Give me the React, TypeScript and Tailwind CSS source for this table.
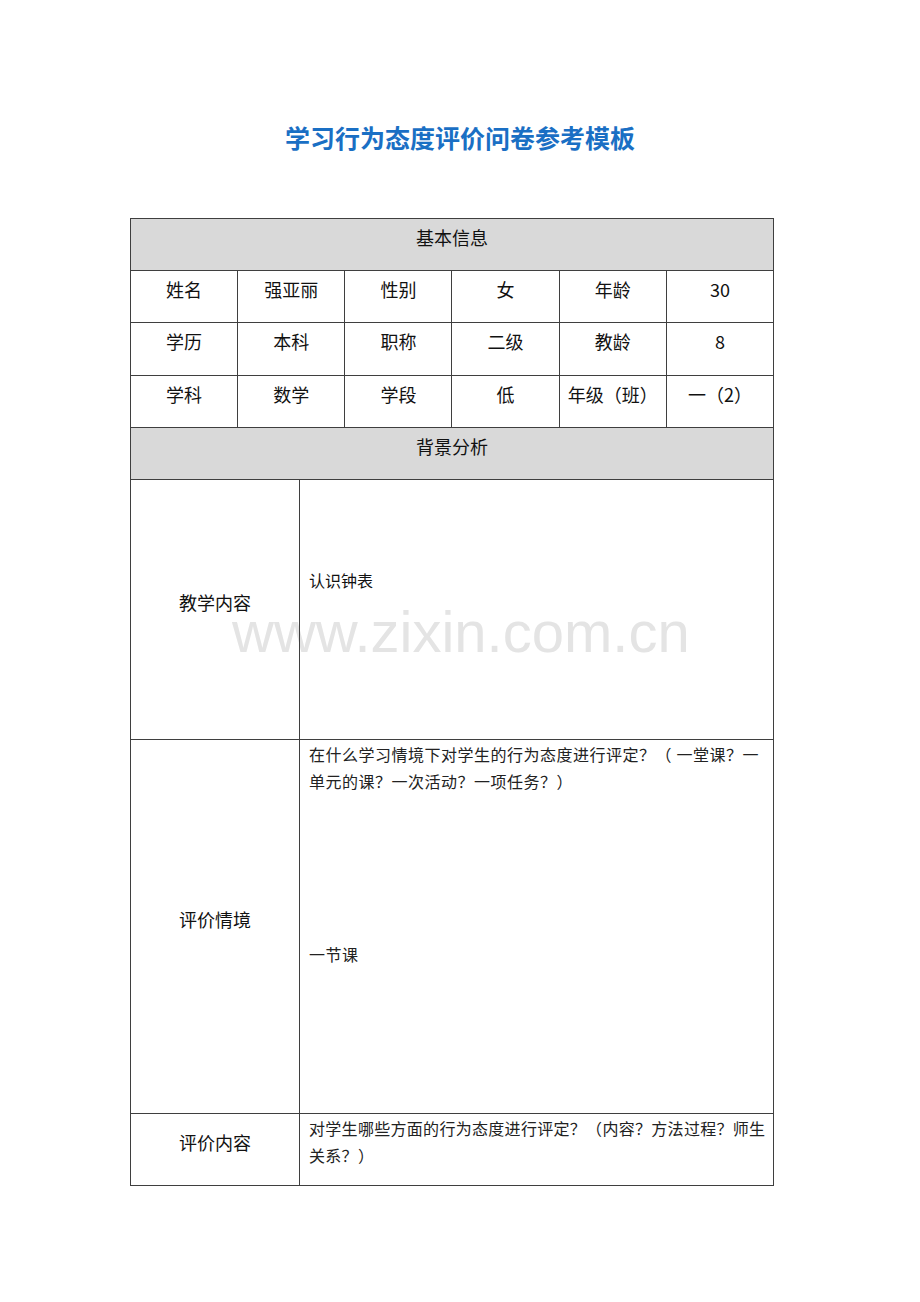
import React from "react";

const sans = "font-['Noto_Sans_CJK_SC','Noto_Sans',sans-serif]";
const serif = "font-['Liberation_Serif','Noto_Sans_CJK_SC',serif]";

type Row = string[];

const infoRows: Row[] = [
    ["姓名", "强亚丽", "性别", "女", "年龄", "30"],
    ["学历", "本科", "职称", "二级", "教龄", "8"],
    ["学科", "数学", "学段", "低", "年级（班）", "一（2）"],
];

const rowHeights = ["h-[52px]", "h-[53px]", "h-[52px]"];

function Cell({ text, h }: { text: string; h: string }) {
    return (
        <div
            className={`${h} border-r border-b border-[#3f3f3f] pt-[6px] text-center text-[18px] leading-[24px] text-[#111]`}
        >
            {text}
        </div>
    );
}

function SectionHead({ title, h }: { title: string; h: string }) {
    return (
        <div
            className={`col-span-6 ${h} border-r border-b border-[#3f3f3f] bg-[#d9d9d9] pt-[6px] text-center text-[18px] leading-[24px] text-[#111]`}
        >
            {title}
        </div>
    );
}

export default function App() {
    return (
        <div className={`min-h-[1302px] w-[920px] bg-white ${sans}`}>
            {/* Title */}
            <h1 className="pt-[120px] text-center text-[25px] font-bold leading-[34px] text-[#1a6fc4]">
                学习行为态度评价问卷参考模板
            </h1>

            <div className="relative mt-[64px] ml-[130px] w-[644px]">
                {/* Watermark */}
                <div className="pointer-events-none absolute left-[102px] top-[385px] z-0 whitespace-nowrap font-['Liberation_Sans',sans-serif] text-[58px] leading-none text-[#e4e4e4]">
                    www.zixin.com.cn
                </div>

                <div className="relative z-10">
                    {/* Basic info */}
                    <div className="grid grid-cols-6 border-l border-t border-[#3f3f3f]">
                        <SectionHead title="基本信息" h="h-[52px]" />
                        {infoRows.map((row, i) =>
                            row.map((t, j) => <Cell key={`${i}-${j}`} text={t} h={rowHeights[i]} />)
                        )}
                        <SectionHead title="背景分析" h="h-[52px]" />
                    </div>

                    {/* Background analysis */}
                    <div className="grid grid-cols-[169px_1fr] border-l border-[#3f3f3f] text-[#111]">
                        <div className="flex h-[260px] items-center justify-center border-r border-b border-[#3f3f3f] pb-[15px] text-[18px] leading-[24px]">
                            教学内容
                        </div>
                        <div className="h-[260px] border-r border-b border-[#3f3f3f] pl-[9px] pt-[88px] text-[16px] leading-[24px]">
                            认识钟表
                        </div>

                        <div className="flex h-[374px] items-center justify-center border-r border-b border-[#3f3f3f] pb-[15px] text-[18px] leading-[24px]">
                            评价情境
                        </div>
                        <div
                            className={`h-[374px] border-r border-b border-[#3f3f3f] pl-[9px] pt-[2px] text-[16px] leading-[27px] tracking-[0.5px] text-[#222] ${serif}`}
                        >
                            <p className="whitespace-nowrap">在什么学习情境下对学生的行为态度进行评定？（ 一堂课？一</p>
                            <p className="whitespace-nowrap">单元的课？一次活动？一项任务？）</p>
                            <p className="mt-[146px]">一节课</p>
                        </div>

                        <div className="flex h-[72px] items-center justify-center border-r border-b border-[#3f3f3f] pb-[15px] text-[18px] leading-[24px]">
                            评价内容
                        </div>
                        <div
                            className={`h-[72px] border-r border-b border-[#3f3f3f] pl-[9px] pt-[2px] text-[16px] leading-[27px] tracking-[0.3px] text-[#222] ${serif}`}
                        >
                            <p className="whitespace-nowrap">对学生哪些方面的行为态度进行评定？（内容？方法过程？师生</p>
                            <p className="whitespace-nowrap">关系？）</p>
                        </div>
                    </div>
                </div>
            </div>
        </div>
    );
}
